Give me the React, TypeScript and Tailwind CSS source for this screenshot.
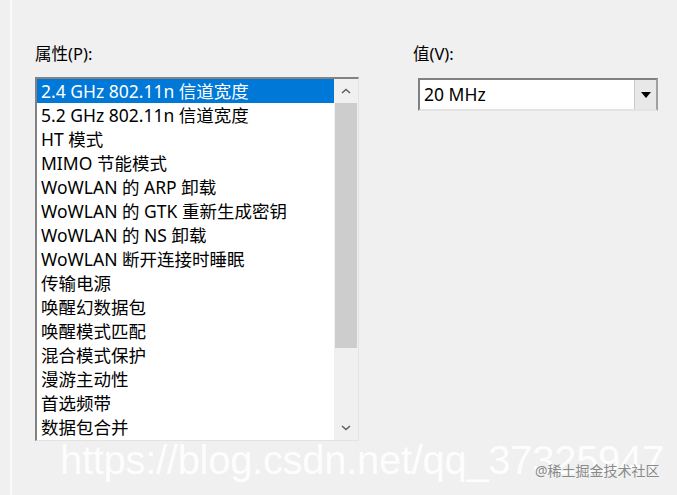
import React from "react";

const items = [
  "2.4 GHz 802.11n 信道宽度",
  "5.2 GHz 802.11n 信道宽度",
  "HT 模式",
  "MIMO 节能模式",
  "WoWLAN 的 ARP 卸载",
  "WoWLAN 的 GTK 重新生成密钥",
  "WoWLAN 的 NS 卸载",
  "WoWLAN 断开连接时睡眠",
  "传输电源",
  "唤醒幻数据包",
  "唤醒模式匹配",
  "混合模式保护",
  "漫游主动性",
  "首选频带",
  "数据包合并",
];

const font = { fontFamily: '"Noto Sans", "Noto Sans CJK SC", sans-serif' };

export default function App() {
  return (
    <div className="relative w-[677px] h-[495px] bg-[#f0f0f0] overflow-hidden" style={font}>
      <div className="absolute left-[10px] top-0 h-full w-[2px] bg-[#fbfbfb]" />
      <div className="flex pl-[35px] pt-[42px]">
        <div className="flex flex-col w-[324px]">
          <div className="text-[16.5px] leading-[24px] text-black h-[35px]">属性(P):</div>
          <div className="flex h-[364px] border-t-2 border-l-2 border-t-[#828282] border-l-[#828282] border-r border-b border-r-[#e3e3e3] border-b-[#e3e3e3] bg-white">
            <div className="flex-1 flex flex-col">
              {items.map((t, i) => (
                <div
                  key={i}
                  className={
                    "h-[24px] leading-[24px] pl-[4px] text-[17.5px] whitespace-nowrap " +
                    (i === 0 ? "bg-[#0078d7] text-white" : "text-black")
                  }
                >
                  {t}
                </div>
              ))}
            </div>
            <div className="w-[24px] flex flex-col bg-[#f0f0f0]">
              <div className="h-[24px] flex items-center justify-center">
                <svg width="10" height="6" viewBox="0 0 10 6">
                  <path d="M1 5 L5 1.5 L9 5" fill="none" stroke="#606060" strokeWidth="1.6" />
                </svg>
              </div>
              <div className="h-[245px] mx-[1px] bg-[#cdcdcd]" />
              <div className="flex-1" />
              <div className="h-[24px] flex items-center justify-center">
                <svg width="10" height="6" viewBox="0 0 10 6">
                  <path d="M1 1 L5 4.5 L9 1" fill="none" stroke="#606060" strokeWidth="1.6" />
                </svg>
              </div>
            </div>
          </div>
        </div>
        <div className="flex flex-col ml-[54px]">
          <div className="text-[16.5px] leading-[24px] text-black h-[36px]">值(V):</div>
          <div className="ml-[5px] w-[240px] h-[33px] flex border-t-2 border-l-2 border-t-[#808080] border-l-[#808080] border-r-2 border-b-2 border-r-[#a0a0a0] border-b-[#e3e3e3] bg-white">
            <div className="flex-1 pl-[4px] text-[17.5px] leading-[29px] text-black">20 MHz</div>
            <div className="w-[22px] bg-[#e8e8e8] border-l border-[#c8c8c8] flex items-center justify-center">
              <svg width="10" height="6" viewBox="0 0 10 6">
                <path d="M0 0 L10 0 L5 6 Z" fill="#000" />
              </svg>
            </div>
          </div>
        </div>
      </div>
      <div
        className="absolute left-[60px] top-[436px] text-[40px] leading-[48px] tracking-[-0.3px] text-white whitespace-nowrap opacity-90"
        style={{ fontFamily: '"Liberation Sans", Arial, sans-serif' }}
      >
        https://blog.csdn.net/qq_37325947
      </div>
      <div className="absolute left-[535px] top-[462px] text-[14px] leading-[18px] text-[#8a8a8a] whitespace-nowrap">
        @稀土掘金技术社区
      </div>
    </div>
  );
}
